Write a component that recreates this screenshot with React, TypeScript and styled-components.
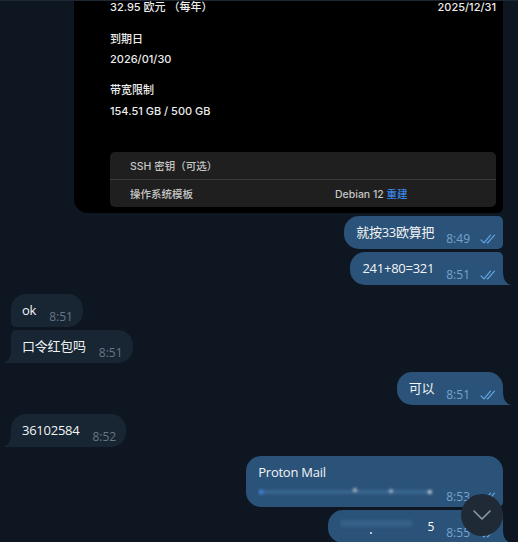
import React from "react";
import styled, { createGlobalStyle } from "styled-components";

const GlobalStyle = createGlobalStyle`
  html, body { margin: 0; padding: 0; background: #0e1621; }
  body { font-family: "Open Sans", "Noto Sans CJK SC", sans-serif; }
`;

const Page = styled.div`
  position: relative;
  width: 518px;
  height: 542px;
  overflow: hidden;
  background: #0e1621;
  border-top: 1px solid #1d2733;
  box-sizing: border-box;
`;

const Feed = styled.div`
  display: flex;
  flex-direction: column;
  padding: 0 15px 0 11px;
`;

const Row = styled.div<{ $out?: boolean; $gap?: number }>`
  display: flex;
  justify-content: ${(p) => (p.$out ? "flex-end" : "flex-start")};
  margin-top: ${(p) => p.$gap ?? 0}px;
`;

/* ---------- screenshot card ---------- */
const Card = styled.div`
  width: 429px;
  box-sizing: border-box;
  background: #000;
  border-radius: 0 0 6px 14px;
  padding: 0 7px 6px 36px;
  display: flex;
  flex-direction: column;
  font-family: Inter, "Noto Sans CJK SC", sans-serif;
  font-size: 11px;
  font-weight: 500;
  color: #ececec;
`;

const CardLine = styled.div<{ $mt?: number; $lh?: number }>`
  display: flex;
  justify-content: space-between;
  line-height: ${(p) => p.$lh ?? 14}px;
  margin-top: ${(p) => p.$mt ?? 0}px;
`;

const Panel = styled.div`
  margin-top: 34px;
  background: #1f1f1f;
  border-radius: 5px;
  font-size: 10.5px;
  color: #c6c6c6;
`;

const PanelRow = styled.div<{ $divider?: boolean }>`
  display: grid;
  grid-template-columns: 205px 1fr;
  align-items: center;
  height: 27px;
  padding-left: 20px;
  border-top: ${(p) => (p.$divider ? "1px solid #3a3a3a" : "none")};
`;

const Link = styled.span`
  color: #3a84e6;
`;

/* ---------- bubbles ---------- */
type BubbleProps = {
  $out?: boolean;
  $tail?: boolean;
  $topSmall?: boolean;
  $bottomSmall?: boolean;
  $stack?: boolean;
};

const radius = (p: BubbleProps) => {
  const big = 15;
  const small = 5;
  const top = p.$topSmall ? small : big;
  const bottom = p.$tail ? 0 : p.$bottomSmall ? small : big;
  return p.$out
    ? `${big}px ${top}px ${bottom}px ${big}px`
    : `${top}px ${big}px ${big}px ${bottom}px`;
};

const Bubble = styled.div<BubbleProps>`
  position: relative;
  display: flex;
  flex-direction: ${(p) => (p.$stack ? "column" : "row")};
  align-items: ${(p) => (p.$stack ? "stretch" : "flex-end")};
  padding: ${(p) => (p.$out ? "7px 7px 7px 12px" : "7px 10px 7px 11px")};
  background: ${(p) => (p.$out ? "#2b5278" : "#182533")};
  border-radius: ${radius};
  color: #f2f4f6;
`;

const Text = styled.span`
  font-size: 13px;
  line-height: 19px;
  letter-spacing: -0.25px;
  white-space: nowrap;
`;

const Line = styled.div`
  display: flex;
  align-items: flex-end;
  height: 18px;
`;

const Meta = styled.span<{ $out?: boolean }>`
  display: inline-flex;
  align-items: center;
  gap: 10px;
  margin-left: ${(p) => (p.$out ? 12 : 13)}px;
  font-size: 12px;
  line-height: 14px;
  color: ${(p) => (p.$out ? "#76a3cf" : "#667685")};
  transform: translateY(4px);
  white-space: nowrap;
`;

const TailSvg = styled.svg<{ $out?: boolean }>`
  position: absolute;
  bottom: 0;
  ${(p) => (p.$out ? "right: -8px;" : "left: -8px;")}
  width: 8px;
  height: 14px;
`;

const ScrollBtn = styled.div`
  position: absolute;
  right: 15px;
  bottom: 6px;
  width: 42px;
  height: 42px;
  border-radius: 50%;
  background: #1f2a36;
  display: flex;
  align-items: center;
  justify-content: center;
`;

const Five = styled.span`
  font-size: 12px;
  line-height: 19px;
  color: #ffffff;
  margin-left: 1px;
`;

const Tail = ({ out }: { out?: boolean }) => (
  <TailSvg $out={out} viewBox="0 0 8 14">
    <path
      d={out ? "M0 0 C0 8 2.5 12.5 8 14 L0 14 Z" : "M8 0 C8 8 5.5 12.5 0 14 L8 14 Z"}
      fill={out ? "#2b5278" : "#182533"}
    />
  </TailSvg>
);

const Ticks = () => (
  <svg width="16" height="10" viewBox="0 0 16 10">
    <path d="M1 5.8 L4 8.8 L10.5 1.2" fill="none" stroke="#62a6e6" strokeWidth="1.2" strokeLinecap="round" strokeLinejoin="round" />
    <path d="M7.2 8.3 L7.7 8.8 L14.5 1.2" fill="none" stroke="#62a6e6" strokeWidth="1.2" strokeLinecap="round" strokeLinejoin="round" />
  </svg>
);

const Msg = ({
  text,
  time,
  out,
  tail,
  topSmall,
  bottomSmall,
}: {
  text: string;
  time: string;
  out?: boolean;
  tail?: boolean;
  topSmall?: boolean;
  bottomSmall?: boolean;
}) => (
  <Bubble $out={out} $tail={tail} $topSmall={topSmall} $bottomSmall={bottomSmall}>
    <Text>{text}</Text>
    <Meta $out={out}>
      {time}
      {out && <Ticks />}
    </Meta>
    {tail && <Tail out={out} />}
  </Bubble>
);

const BlurLine = () => (
  <svg width="176" height="18" viewBox="0 0 176 18">
    <defs>
      <filter id="bl1" x="-10%" y="-100%" width="120%" height="300%">
        <feGaussianBlur stdDeviation="1.6" />
      </filter>
    </defs>
    <g filter="url(#bl1)">
      <rect x="2" y="8" width="170" height="4" fill="#4676a4" opacity="0.55" />
      <circle cx="3" cy="10" r="2.2" fill="#3f8cf0" />
      <circle cx="97" cy="8" r="1.4" fill="#ffffff" />
      <circle cx="133" cy="9" r="1.4" fill="#dfefff" />
      <circle cx="172" cy="10" r="1.7" fill="#ffffff" />
    </g>
  </svg>
);

const BlurSmall = () => (
  <svg width="86" height="19" viewBox="0 0 86 19">
    <defs>
      <filter id="bl2" x="-10%" y="-100%" width="120%" height="300%">
        <feGaussianBlur stdDeviation="2" />
      </filter>
    </defs>
    <g filter="url(#bl2)">
      <rect x="0" y="4" width="72" height="5" fill="#4a79a6" opacity="0.5" />
    </g>
    <circle cx="31" cy="16" r="0.9" fill="#ffffff" />
  </svg>
);

export default function App() {
  return (
    <>
      <GlobalStyle />
      <Page>
        <Feed>
          <Row $out>
            <Card>
              <CardLine $lh={12}>
                <span>32.95 欧元 （每年）</span>
                <span>2025/12/31</span>
              </CardLine>
              <CardLine $mt={19}>到期日</CardLine>
              <CardLine $mt={6}>2026/01/30</CardLine>
              <CardLine $mt={17}>带宽限制</CardLine>
              <CardLine $mt={7}>154.51 GB / 500 GB</CardLine>
              <Panel>
                <PanelRow>
                  <span>SSH 密钥（可选）</span>
                </PanelRow>
                <PanelRow $divider>
                  <span>操作系统模板</span>
                  <span>
                    Debian 12 <Link>重建</Link>
                  </span>
                </PanelRow>
              </Panel>
            </Card>
          </Row>

          <Row $out $gap={3}>
            <Msg out topSmall bottomSmall text="就按33欧算把" time="8:49" />
          </Row>
          <Row $out $gap={3}>
            <Msg out topSmall tail text="241+80=321" time="8:51" />
          </Row>

          <Row $gap={9}>
            <Msg bottomSmall text="ok" time="8:51" />
          </Row>
          <Row $gap={3}>
            <Msg topSmall tail text="口令红包吗" time="8:51" />
          </Row>

          <Row $out $gap={9}>
            <Msg out tail text="可以" time="8:51" />
          </Row>

          <Row $gap={9}>
            <Msg tail text="36102584" time="8:52" />
          </Row>

          <Row $out $gap={9}>
            <Bubble $out $stack $bottomSmall>
              <Text>Proton Mail</Text>
              <Line>
                <BlurLine />
                <Meta $out>
                  8:53
                  <Ticks />
                </Meta>
              </Line>
            </Bubble>
          </Row>
          <Row $out $gap={3}>
            <Bubble $out $topSmall $tail>
              <BlurSmall />
              <Five>5</Five>
              <Meta $out>
                8:55
                <Ticks />
              </Meta>
              <Tail out />
            </Bubble>
          </Row>
        </Feed>

        <ScrollBtn>
          <svg width="20" height="12" viewBox="0 0 20 12">
            <polyline points="2,2 10,10 18,2" fill="none" stroke="#8c9aa9" strokeWidth="1.6" strokeLinecap="round" strokeLinejoin="round" />
          </svg>
        </ScrollBtn>
      </Page>
    </>
  );
}
